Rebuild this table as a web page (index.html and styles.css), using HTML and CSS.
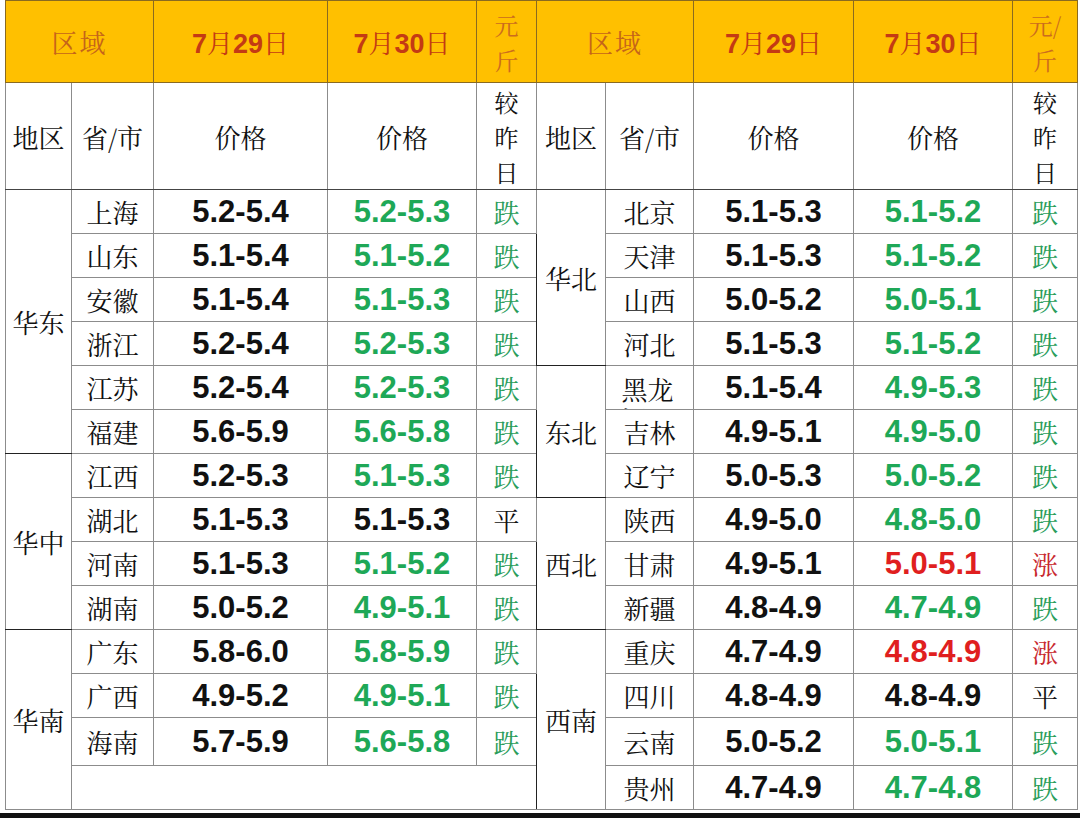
FILE: index.html
```html
<!DOCTYPE html>
<html lang="zh-CN">
<head>
<meta charset="utf-8">
<title>价格表</title>
<link rel="stylesheet" href="styles.css">
</head>
<body>
<div class="page">
<table class="price">
  <colgroup>
    <col class="c1"><col class="c2"><col class="c3"><col class="c4"><col class="c5">
    <col class="c6"><col class="c7"><col class="c8"><col class="c9"><col class="c10">
  </colgroup>
  <tr class="h1">
    <td colspan="2" class="area">区域</td>
    <td class="date"><b>7</b>月<b>29</b>日</td>
    <td class="date"><b>7</b>月<b>30</b>日</td>
    <td class="unit">元<br>斤</td>
    <td colspan="2" class="area gl">区域</td>
    <td class="date"><b>7</b>月<b>29</b>日</td>
    <td class="date"><b>7</b>月<b>30</b>日</td>
    <td class="unit">元/<br>斤</td>
  </tr>
  <tr class="h2">
    <td>地区</td><td>省/市</td><td>价格</td><td>价格</td><td class="cmp">较<br>昨<br>日</td>
    <td class="gl">地区</td><td>省/市</td><td>价格</td><td>价格</td><td class="cmp">较<br>昨<br>日</td>
  </tr>
  <tr class="r">
    <td rowspan="6" class="reg gb">华东</td><td class="pv">上海</td><td class="n">5.2-5.4</td><td class="n g">5.2-5.3</td><td class="t dg">跌</td>
    <td rowspan="4" class="reg gl gb">华北</td><td class="pv">北京</td><td class="n">5.1-5.3</td><td class="n g">5.1-5.2</td><td class="t dg">跌</td>
  </tr>
  <tr class="r">
    <td class="pv">山东</td><td class="n">5.1-5.4</td><td class="n g">5.1-5.2</td><td class="t dg">跌</td>
    <td class="pv">天津</td><td class="n">5.1-5.3</td><td class="n g">5.1-5.2</td><td class="t dg">跌</td>
  </tr>
  <tr class="r">
    <td class="pv">安徽</td><td class="n">5.1-5.4</td><td class="n g">5.1-5.3</td><td class="t dg">跌</td>
    <td class="pv">山西</td><td class="n">5.0-5.2</td><td class="n g">5.0-5.1</td><td class="t dg">跌</td>
  </tr>
  <tr class="r">
    <td class="pv">浙江</td><td class="n">5.2-5.4</td><td class="n g">5.2-5.3</td><td class="t dg">跌</td>
    <td class="pv">河北</td><td class="n">5.1-5.3</td><td class="n g">5.1-5.2</td><td class="t dg">跌</td>
  </tr>
  <tr class="r">
    <td class="pv">江苏</td><td class="n">5.2-5.4</td><td class="n g">5.2-5.3</td><td class="t dg">跌</td>
    <td rowspan="3" class="reg gl gb">东北</td><td class="pv"><div class="clip">黑龙江</div></td><td class="n">5.1-5.4</td><td class="n g">4.9-5.3</td><td class="t dg">跌</td>
  </tr>
  <tr class="r">
    <td class="pv">福建</td><td class="n">5.6-5.9</td><td class="n g">5.6-5.8</td><td class="t dg">跌</td>
    <td class="pv">吉林</td><td class="n">4.9-5.1</td><td class="n g">4.9-5.0</td><td class="t dg">跌</td>
  </tr>
  <tr class="r">
    <td rowspan="4" class="reg gb">华中</td><td class="pv">江西</td><td class="n">5.2-5.3</td><td class="n g">5.1-5.3</td><td class="t dg">跌</td>
    <td class="pv">辽宁</td><td class="n">5.0-5.3</td><td class="n g">5.0-5.2</td><td class="t dg">跌</td>
  </tr>
  <tr class="r">
    <td class="pv">湖北</td><td class="n">5.1-5.3</td><td class="n">5.1-5.3</td><td class="t">平</td>
    <td rowspan="3" class="reg gl gb">西北</td><td class="pv">陕西</td><td class="n">4.9-5.0</td><td class="n g">4.8-5.0</td><td class="t dg">跌</td>
  </tr>
  <tr class="r">
    <td class="pv">河南</td><td class="n">5.1-5.3</td><td class="n g">5.1-5.2</td><td class="t dg">跌</td>
    <td class="pv">甘肃</td><td class="n">4.9-5.1</td><td class="n red">5.0-5.1</td><td class="t up">涨</td>
  </tr>
  <tr class="r">
    <td class="pv">湖南</td><td class="n">5.0-5.2</td><td class="n g">4.9-5.1</td><td class="t dg">跌</td>
    <td class="pv">新疆</td><td class="n">4.8-4.9</td><td class="n g">4.7-4.9</td><td class="t dg">跌</td>
  </tr>
  <tr class="r">
    <td rowspan="4" class="reg">华南</td><td class="pv">广东</td><td class="n">5.8-6.0</td><td class="n g">5.8-5.9</td><td class="t dg">跌</td>
    <td rowspan="4" class="reg gl">西南</td><td class="pv">重庆</td><td class="n">4.7-4.9</td><td class="n red">4.8-4.9</td><td class="t up">涨</td>
  </tr>
  <tr class="r">
    <td class="pv">广西</td><td class="n">4.9-5.2</td><td class="n g">4.9-5.1</td><td class="t dg">跌</td>
    <td class="pv">四川</td><td class="n">4.8-4.9</td><td class="n">4.8-4.9</td><td class="t">平</td>
  </tr>
  <tr class="r tall">
    <td class="pv">海南</td><td class="n">5.7-5.9</td><td class="n g">5.6-5.8</td><td class="t dg">跌</td>
    <td class="pv">云南</td><td class="n">5.0-5.2</td><td class="n g">5.0-5.1</td><td class="t dg">跌</td>
  </tr>
  <tr class="r">
    <td colspan="4" class="empty"></td>
    <td class="pv">贵州</td><td class="n">4.7-4.9</td><td class="n g">4.7-4.8</td><td class="t dg">跌</td>
  </tr>
</table>
<div class="bar"></div>
</div>
</body>
</html>
```

FILE: styles.css
```css
html, body {
  margin: 0;
  padding: 0;
  background: #ffffff;
}
body {
  width: 1080px;
  height: 818px;
  overflow: hidden;
}
.page {
  display: flex;
  flex-direction: column;
  height: 818px;
}
.price {
  border-collapse: collapse;
  table-layout: fixed;
  width: 1073px;
  margin-left: 5px;
  font-family: "Noto Serif CJK SC", "Noto Sans CJK SC", "Liberation Serif", serif;
  font-size: 26px;
  color: #111;
  border: 1px solid #222;
}
.c1 { width: 66px; }
.c2 { width: 82px; }
.c3 { width: 174px; }
.c4 { width: 149px; }
.c5 { width: 60px; }
.c6 { width: 69px; }
.c7 { width: 88px; }
.c8 { width: 160px; }
.c9 { width: 159px; }
.c10 { width: 65px; }

.price td {
  border: 1px solid #8c8c8c;
  padding: 0;
  text-align: center;
  vertical-align: middle;
  overflow: hidden;
  white-space: nowrap;
}
.price td.gl { border-left: 1px solid #222; }
.price td.gb { border-bottom: 1px solid #222; }

.h1 { height: 82px; }
.h1 td {
  background: #ffc000;
  border-color: #8a6a20;
  color: #c5641a;
}
.h1 .area { letter-spacing: 2px; }
.h1 .date {
  color: #c43a14;
  font-weight: 400;
}
.h1 .date b {
  font-family: "Liberation Sans", Arial, sans-serif;
  font-weight: 700;
  font-size: 27px;
}
.h1 .unit {
  font-size: 24px;
  line-height: 35px;
  color: #cc6c1e;
}
.h2 { height: 107px; }
.h2 td { border-bottom-color: #444; }
.h2 .cmp {
  font-size: 24px;
  line-height: 35px;
}

.r { height: 44px; }
.r.tall { height: 48px; }
.reg { color: #111; }
.pv { color: #111; }
.n {
  font-family: "Liberation Sans", Arial, sans-serif;
  font-weight: 700;
  font-size: 31px;
  color: #111;
}
.n.g { color: #1ea857; }
.n.red { color: #e01f1f; }
.t { color: #111; }
.t.dg { color: #2a9d5a; }
.t.up { color: #c8282e; }

.clip {
  width: 56px;
  height: 35px;
  margin: 0 auto;
  padding-top: 7px;
  line-height: 30px;
  white-space: normal;
  overflow: hidden;
  text-align: left;
}
.empty { border-right-color: #222; }

.bar {
  margin-top: auto;
  height: 5px;
  background: #111;
}
```
